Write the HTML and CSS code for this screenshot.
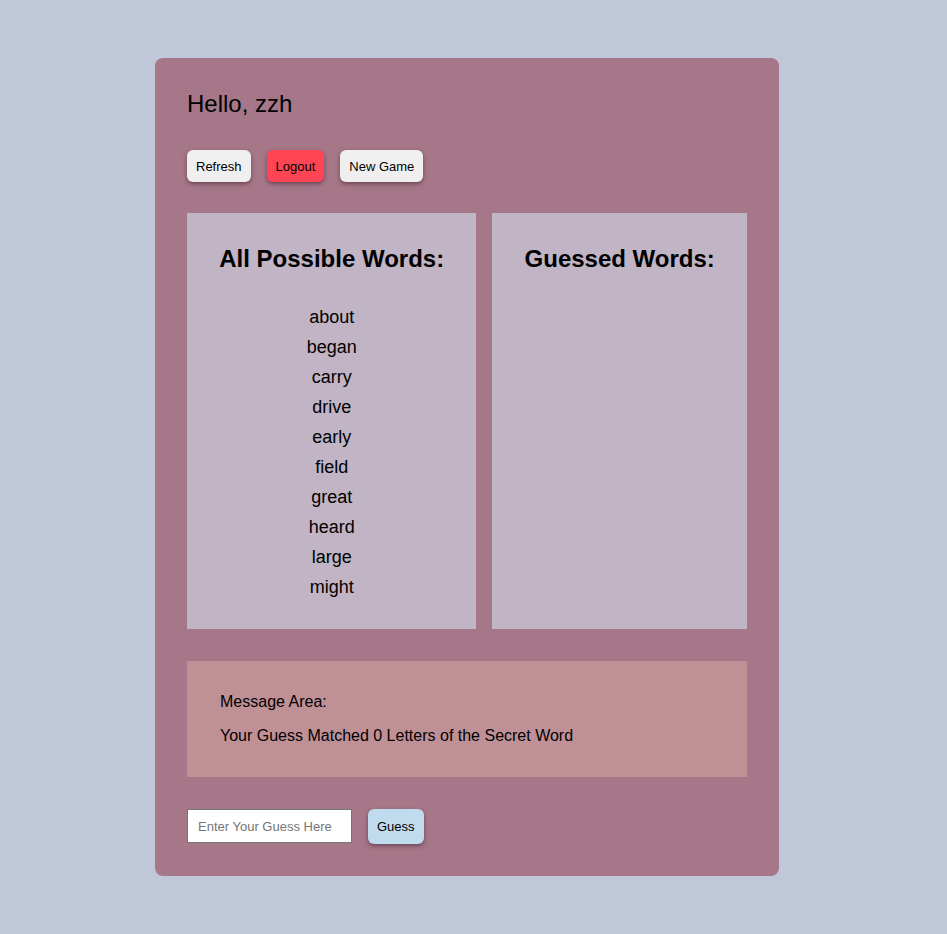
FILE: index.html
```html
<!DOCTYPE html>
<html lang="en">
<head>
<meta charset="utf-8">
<title>Word Guess</title>
<link rel="stylesheet" href="styles.css">
</head>
<body>
<main class="card">
  <h1 class="greeting">Hello, zzh</h1>
  <div class="controls">
    <button class="btn">Refresh</button>
    <button class="btn btn-logout">Logout</button>
    <button class="btn">New Game</button>
  </div>
  <div class="panels">
    <section class="panel">
      <h2 class="panel-title">All Possible Words:</h2>
      <ul class="word-list">
        <li>about</li>
        <li>began</li>
        <li>carry</li>
        <li>drive</li>
        <li>early</li>
        <li>field</li>
        <li>great</li>
        <li>heard</li>
        <li>large</li>
        <li>might</li>
      </ul>
    </section>
    <section class="panel">
      <h2 class="panel-title">Guessed Words:</h2>
      <ul class="word-list"></ul>
    </section>
  </div>
  <div class="message">
    <p>Message Area:</p>
    <p>Your Guess Matched 0 Letters of the Secret Word</p>
  </div>
  <form class="guess-form" onsubmit="return false">
    <input class="guess-input" type="text" placeholder="Enter Your Guess Here">
    <button class="btn btn-guess" type="submit">Guess</button>
  </form>
</main>
</body>
</html>
```
FILE: styles.css
```css
html, body {
  margin: 0;
  padding: 0;
}
body {
  background: #bfc7d8;
  font-family: "Liberation Sans", Arial, sans-serif;
  color: #000;
  padding: 58px 0;
}
.card {
  box-sizing: border-box;
  width: 624px;
  margin-left: 155px;
  background: #a57788;
  border-radius: 8px;
  padding: 32px;
  display: flex;
  flex-direction: column;
  gap: 32px;
}
.greeting {
  margin: 0;
  font-size: 24px;
  font-weight: normal;
  line-height: 28px;
}
.controls {
  display: flex;
  gap: 16px;
}
.btn {
  font-family: "Liberation Sans", Arial, sans-serif;
  font-size: 13px;
  height: 32px;
  padding: 0 9px;
  border: none;
  border-radius: 6px;
  background: #efefef;
  color: #000;
  box-shadow: 0 2px 4px rgba(60, 30, 45, 0.55);
}
.btn-logout {
  background: #ff4554;
}
.panels {
  display: flex;
  gap: 16px;
  margin-top: -1px;
}
.panel {
  flex: 1 1 auto;
  background: #c1b4c4;
  padding: 32px 32px 27px;
  text-align: center;
}
.panel-title {
  margin: 0 0 29px;
  font-size: 24px;
  line-height: 28px;
  font-weight: bold;
  white-space: nowrap;
}
.word-list {
  list-style: none;
  margin: 0;
  padding: 0;
  font-size: 18px;
  line-height: 30px;
}
.message {
  background: #c09097;
  padding: 32px 33px;
  display: flex;
  flex-direction: column;
  gap: 16px;
  font-size: 16px;
  line-height: 18px;
}
.message p {
  margin: 0;
}
.guess-form {
  display: flex;
  gap: 16px;
  align-items: flex-start;
}
.guess-input {
  box-sizing: border-box;
  width: 165px;
  height: 34px;
  border: 1px solid #767676;
  padding: 0 10px;
  font-family: "Liberation Sans", Arial, sans-serif;
  font-size: 13px;
  background: #fff;
}
.guess-input::placeholder {
  color: #757575;
}
.btn-guess {
  height: 35px;
  padding: 0 9px;
  background: #c0dbee;
}
```
